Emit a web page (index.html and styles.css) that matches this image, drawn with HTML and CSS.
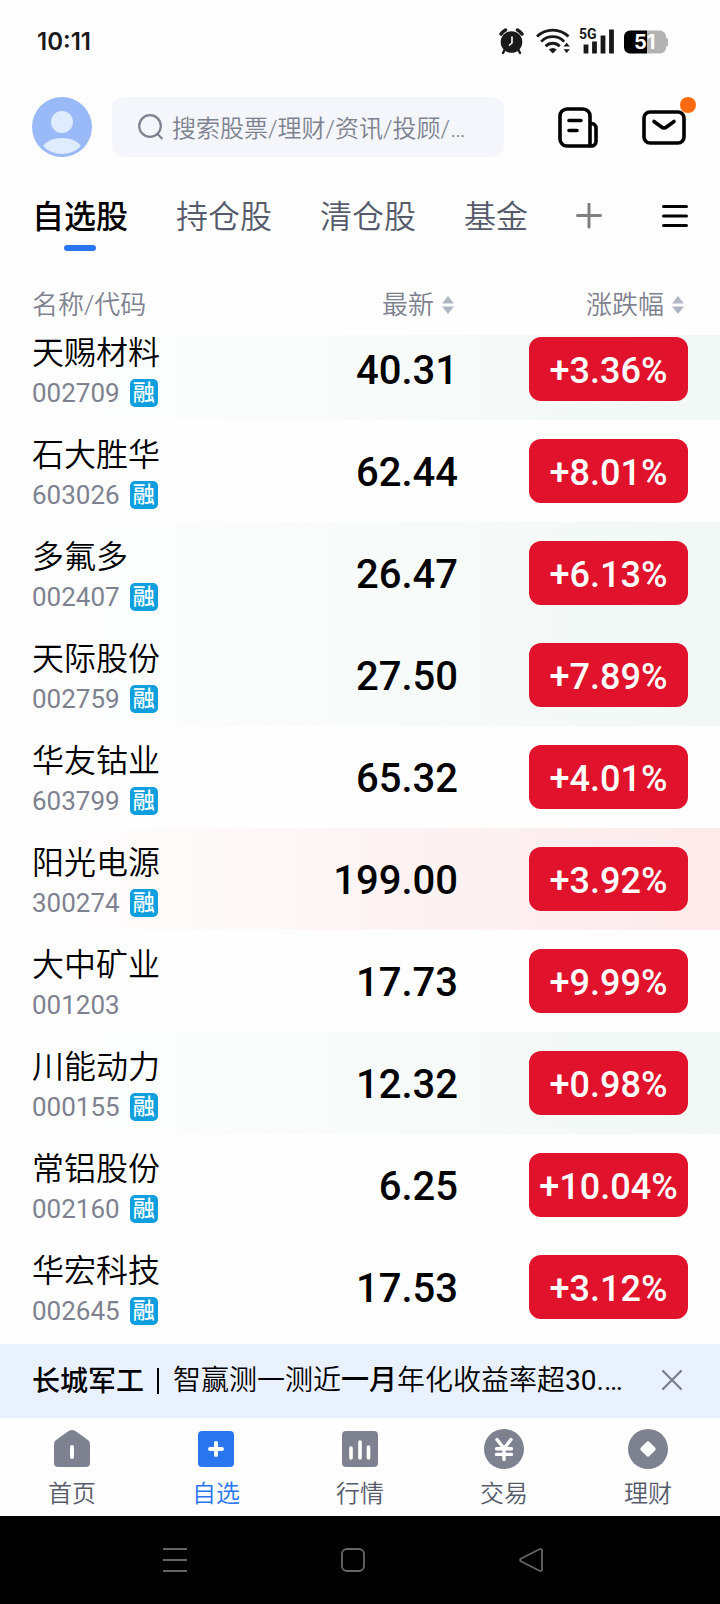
FILE: index.html
```html
<!DOCTYPE html>
<html lang="zh-CN">
<head>
<meta charset="utf-8">
<meta name="viewport" content="width=device-width, initial-scale=1">
<title>自选股</title>
<link rel="stylesheet" href="styles.css">
</head>
<body>
<div class="status">
  <span class="clock">10:11</span>
  <div class="status-icons">
    <svg width="26" height="28" viewBox="0 0 26 28" aria-hidden="true">
      <circle cx="12.500" cy="15" r="10.800" fill="#1a1a1a"/>
      <path d="M2 7A12 12 0 0 1 6.500 3M23 7A12 12 0 0 0 18.500 3" fill="none" stroke="#1a1a1a" stroke-width="3.400" stroke-linecap="round"/>
      <path d="M5.500 23l-1.500 3M19.500 23l1.500 3" stroke="#1a1a1a" stroke-width="2.400" stroke-linecap="round"/>
      <path d="M13 9.500v6.500l-3 2.500" fill="none" stroke="#fff" stroke-width="1.600"/>
    </svg>
    <svg width="34" height="28" viewBox="0 0 34 28" aria-hidden="true">
      <g fill="none" stroke="#1a1a1a" stroke-width="2.800">
        <path d="M1 9.500a22.500 22.500 0 0 1 31.500 0"/>
        <path d="M5.200 14.600a16 16 0 0 1 23 0"/>
        <path d="M9.600 19.200a10 10 0 0 1 14.200 0"/>
      </g>
      <path d="M12.800 22.600a6 6 0 0 1 8 0L16.800 26.600z" fill="#1a1a1a"/>
      <path d="M27.500 19.500l3.200-3.800 3.200 3.800zM27.500 22.200h6.400l-3.200 3.800z" fill="#1a1a1a"/>
    </svg>
    <svg width="36" height="28" viewBox="0 0 36 28" aria-hidden="true">
      <text x="0" y="12" class="net">5G</text>
      <path d="M7 17.500v9M15.500 14.500v12M24 8.500v18M32.500 2.500v24" stroke="#1a1a1a" stroke-width="4.800" stroke-linecap="butt"/>
    </svg>
    <svg width="44" height="28" viewBox="0 0 44 28" aria-hidden="true">
      <path d="M23 3.500h13a6 6 0 0 1 6 6v1.500a3.500 3.500 0 0 1 0 8.500a6 6 0 0 1-6 7H23z" fill="#b3b3b3"/>
      <path d="M23 3.500H6a6 6 0 0 0-6 6v11a6 6 0 0 0 6 6h17z" fill="#000"/>
      <text x="10" y="22" class="batt">51</text>
    </svg>
  </div>
</div>

<header class="top">
  <button class="icon-btn" aria-label="我的">
    <svg width="60" height="60" viewBox="0 0 60 60">
      <circle cx="30" cy="30" r="30" fill="#99b9f8"/>
      <circle cx="30" cy="25" r="11" fill="#dfebff"/>
      <path d="M11 49Q17 41 30 41T49 49Q41 57 30 57T11 49z" fill="#dfebff"/>
    </svg>
  </button>
  <label class="search">
    <svg width="26" height="26" viewBox="0 0 26 26" aria-hidden="true">
      <circle cx="12" cy="12" r="10.800" fill="none" stroke="#7e8290" stroke-width="2.200"/>
      <path d="M19.500 20l5 5" stroke="#7e8290" stroke-width="2.200"/>
    </svg>
    <input type="text" aria-label="搜索" placeholder="搜索股票/理财/资讯/投顾/…">
  </label>
  <div class="actions">
    <button class="icon-btn" aria-label="资讯">
      <svg width="44" height="44" viewBox="0 0 44 44" fill="none" stroke="#000" stroke-width="3.600">
        <path d="M34 41H11a7 7 0 0 1-7-7V11a7 7 0 0 1 7-7h16a7 7 0 0 1 7 7v30"/>
        <path d="M34 18.500h1.500a4.500 4.500 0 0 1 4.500 4.500v13.500a4.500 4.500 0 0 1-4.500 4.500H33"/>
        <path d="M13 15.500h12M13 25.500h8" stroke-linecap="round"/>
      </svg>
    </button>
    <button class="icon-btn mail" aria-label="消息">
      <svg width="48" height="44" viewBox="0 0 48 44" fill="none" stroke="#000" stroke-width="3.600">
        <rect x="4" y="7" width="40" height="31" rx="6"/>
        <path d="M14 16.500l7.500 5.500a4 4 0 0 0 5 0l7.500-5.500" stroke-linecap="round"/>
      </svg>
      <span class="dot"></span>
    </button>
  </div>
</header>

<nav class="groups" aria-label="分组">
  <a href="#" class="group current" aria-current="page">自选股</a>
  <a href="#" class="group">持仓股</a>
  <a href="#" class="group">清仓股</a>
  <a href="#" class="group">基金</a>
  <button class="icon-btn" aria-label="添加分组">
    <svg width="26" height="26" viewBox="0 0 26 26" stroke="#808080" stroke-width="3" stroke-linecap="round"><path d="M1.500 12.500h23M13 1v23"/></svg>
  </button>
  <button class="icon-btn menu" aria-label="菜单">
    <svg width="26" height="26" viewBox="0 0 26 26" stroke="#000" stroke-width="3" stroke-linecap="round"><path d="M1.500 3.500h23M1.500 13h23M1.500 22.500h23"/></svg>
  </button>
</nav>

<table class="quotes">
  <thead>
    <tr>
      <th class="name" scope="col">名称/代码</th>
      <th class="price" scope="col"><button class="sort">最新<svg width="12" height="18" viewBox="0 0 12 18" fill="#b0b7c4"><path d="M0 7.500L6 0l6 7.500zM0 10.500h12L6 18z"/></svg></button></th>
      <th class="change" scope="col"><button class="sort">涨跌幅<svg width="12" height="18" viewBox="0 0 12 18" fill="#b0b7c4"><path d="M0 7.500L6 0l6 7.500zM0 10.500h12L6 18z"/></svg></button></th>
    </tr>
  </thead>
  <tbody>
    <tr class="fall"><td class="name"><span class="title">天赐材料</span><span class="code">002709<i class="tag">融</i></span></td><td class="price">40.31</td><td class="change"><span class="pill">+3.36%</span></td></tr>
    <tr><td class="name"><span class="title">石大胜华</span><span class="code">603026<i class="tag">融</i></span></td><td class="price">62.44</td><td class="change"><span class="pill">+8.01%</span></td></tr>
    <tr class="fall"><td class="name"><span class="title">多氟多</span><span class="code">002407<i class="tag">融</i></span></td><td class="price">26.47</td><td class="change"><span class="pill">+6.13%</span></td></tr>
    <tr class="fall"><td class="name"><span class="title">天际股份</span><span class="code">002759<i class="tag">融</i></span></td><td class="price">27.50</td><td class="change"><span class="pill">+7.89%</span></td></tr>
    <tr><td class="name"><span class="title">华友钴业</span><span class="code">603799<i class="tag">融</i></span></td><td class="price">65.32</td><td class="change"><span class="pill">+4.01%</span></td></tr>
    <tr class="rise"><td class="name"><span class="title">阳光电源</span><span class="code">300274<i class="tag">融</i></span></td><td class="price">199.00</td><td class="change"><span class="pill">+3.92%</span></td></tr>
    <tr><td class="name"><span class="title">大中矿业</span><span class="code">001203</span></td><td class="price">17.73</td><td class="change"><span class="pill">+9.99%</span></td></tr>
    <tr class="fall"><td class="name"><span class="title">川能动力</span><span class="code">000155<i class="tag">融</i></span></td><td class="price">12.32</td><td class="change"><span class="pill">+0.98%</span></td></tr>
    <tr><td class="name"><span class="title">常铝股份</span><span class="code">002160<i class="tag">融</i></span></td><td class="price">6.25</td><td class="change"><span class="pill">+10.04%</span></td></tr>
    <tr><td class="name"><span class="title">华宏科技</span><span class="code">002645<i class="tag">融</i></span></td><td class="price">17.53</td><td class="change"><span class="pill">+3.12%</span></td></tr>
  </tbody>
</table>

<aside class="notice">
  <strong>长城军工</strong>
  <span class="rule"></span>
  <a href="#" class="notice-text">智赢测一测近<b>一月</b>年化收益率超<span class="figure">30.…</span></a>
  <button class="icon-btn" aria-label="关闭">
    <svg width="32" height="32" viewBox="0 0 32 32" stroke="#7e8290" stroke-width="2.400" stroke-linecap="round"><path d="M7 6l18 18M25 6L7 24"/></svg>
  </button>
</aside>

<nav class="tabs" aria-label="主导航">
  <a href="#" class="tab">
    <svg width="40" height="40" viewBox="0 0 40 40"><path d="M17 1.800Q20 0 23 1.800L36 11Q38 12.500 38 15V34a4 4 0 0 1-4 4H6a4 4 0 0 1-4-4V15Q2 12.500 4 11z" fill="#7e8290"/><path d="M20 18v10" stroke="#fff" stroke-width="4" stroke-linecap="round"/></svg>
    首页</a>
  <a href="#" class="tab current" aria-current="page">
    <svg width="40" height="40" viewBox="0 0 40 40"><rect x="2" y="2" width="36" height="36" rx="4" fill="#2a75f0"/><path d="M14 20h12M20 14v12" stroke="#fff" stroke-width="4" stroke-linecap="round"/></svg>
    自选</a>
  <a href="#" class="tab">
    <svg width="40" height="40" viewBox="0 0 40 40"><rect x="2" y="2" width="36" height="36" rx="4" fill="#7e8290"/><path d="M11 19v10M20 13v16M28.500 18v11" stroke="#fff" stroke-width="3.600" stroke-linecap="round"/></svg>
    行情</a>
  <a href="#" class="tab">
    <svg width="40" height="40" viewBox="0 0 40 40"><circle cx="20" cy="20" r="20" fill="#7e8290"/><path d="M13 10.500l7 9 7-9M20 20v10.500M12.500 19.800h15M12.500 25.400h15" fill="none" stroke="#fff" stroke-width="3.400" stroke-linecap="round"/></svg>
    交易</a>
  <a href="#" class="tab">
    <svg width="40" height="40" viewBox="0 0 40 40"><circle cx="20" cy="20" r="20" fill="#7e8290"/><rect x="14" y="14" width="12" height="12" rx="2" fill="#fff" transform="rotate(45 20 20)"/></svg>
    理财</a>
</nav>

<div class="system">
  <button class="icon-btn" aria-label="最近任务"><svg width="24" height="24" viewBox="0 0 24 24" stroke="#666" stroke-width="1.800"><path d="M0 1h24M0 12h24M0 23h24"/></svg></button>
  <button class="icon-btn" aria-label="主屏幕"><svg width="24" height="24" viewBox="0 0 24 24" fill="none" stroke="#666" stroke-width="1.800"><rect x="1" y="1" width="22" height="22" rx="5"/></svg></button>
  <button class="icon-btn" aria-label="返回"><svg width="24" height="24" viewBox="0 0 24 24" fill="none" stroke="#666" stroke-width="1.800"><path d="M20.500 1.300L2.200 10.500Q0 12 2.200 13.500L20.500 22.700Q23 23.500 23 21V3Q23 .5 20.500 1.300z"/></svg></button>
</div>
</body>
</html>
```

FILE: styles.css
```css
* {
  box-sizing: border-box;
}

body {
  margin: 0;
  height: 100vh;
  display: flex;
  flex-direction: column;
  background: #fefefe;
  color: #000;
  font-family: Roboto, "Noto Sans CJK SC", sans-serif;
  font-size: 26px;
}

a {
  color: inherit;
  text-decoration: none;
}

button {
  margin: 0;
  padding: 0;
  border: 0;
  background: none;
  font: inherit;
  color: inherit;
}

svg {
  display: block;
  flex: none;
}

.icon-btn {
  flex: none;
}

/* Status bar */
.status {
  display: flex;
  align-items: center;
  justify-content: space-between;
  height: 82px;
  flex: none;
  padding: 0 52px 0 37px;
}

.clock {
  padding-top: 2px;
  font: 600 24px/32px Inter, sans-serif;
  color: #1a1a1a;
}

.status-icons {
  display: flex;
  gap: 9px;
}

.status-icons svg:first-child {
  margin-right: 2px;
}

.net {
  font: 700 14px Roboto, sans-serif;
  fill: #1a1a1a;
}

.batt {
  font: 700 20px Inter, sans-serif;
  fill: #fff;
}

/* Search header */
.top {
  display: flex;
  align-items: center;
  flex: none;
  height: 90px;
  padding: 0 32px;
  gap: 20px;
}

.search {
  flex: 1;
  display: flex;
  align-items: center;
  gap: 8px;
  min-width: 0;
  height: 60px;
  padding: 0 26px;
  border-radius: 12px;
  background: #f4f6fb;
}

.search input {
  flex: 1;
  min-width: 0;
  padding: 3px 0 0;
  border: 0;
  outline: 0;
  background: none;
  font: 350 24px/36px Roboto, "Noto Sans CJK SC", sans-serif;
}

.search input::placeholder {
  color: #7e8290;
  opacity: 1;
}

.actions {
  display: flex;
  gap: 40px;
  padding-left: 32px;
}

.mail {
  position: relative;
}

.dot {
  position: absolute;
  top: -8px;
  right: -8px;
  width: 16px;
  height: 16px;
  border-radius: 50%;
  background: #ff6a0f;
}

/* Watchlist groups */
.groups {
  display: flex;
  align-items: center;
  flex: none;
  height: 88px;
  padding: 0 32px;
  gap: 48px;
}

.group {
  position: relative;
  padding-top: 2px;
  font-size: 32px;
  line-height: 48px;
  color: #565b6b;
  font-weight: 350;
}

.group.current {
  color: #000;
  font-weight: 500;
}

.group.current::after {
  content: "";
  position: absolute;
  left: 50%;
  bottom: -10px;
  width: 32px;
  height: 6px;
  margin-left: -16px;
  border-radius: 3px;
  background: #2a75f0;
}

.menu {
  margin-left: auto;
}

/* Quotes */
.quotes {
  flex: 1;
  min-height: 0;
  display: flex;
  flex-direction: column;
}

.quotes tr {
  display: flex;
  padding: 0 32px;
}

.quotes th,
.quotes td {
  padding: 0;
}

.quotes thead tr {
  height: 75px;
  padding-top: 14px;
  align-items: center;
  color: #7e8290;
}

.quotes th {
  font-weight: 350;
  line-height: 40px;
}

.quotes th.price,
.quotes th.change {
  padding-right: 4px;
}

.sort {
  display: flex;
  align-items: center;
  justify-content: flex-end;
  gap: 8px;
  width: 100%;
}

.quotes tbody {
  display: block;
  flex: 1;
  min-height: 0;
  overflow: hidden;
}

.quotes tbody tr {
  height: 102px;
}

.quotes tbody tr:first-child {
  margin-top: -17px;
}

.fall {
  background: linear-gradient(90deg, #fefefe 4%, #f1f8f6);
}

.rise {
  background: linear-gradient(90deg, #fefefe 4%, #fdeaeb);
}

.name {
  flex: 1;
  text-align: left;
}

.quotes td.name {
  padding-top: 17px;
}

.title {
  display: block;
  font-size: 32px;
  line-height: 36px;
  font-weight: 350;
}

.code {
  display: flex;
  align-items: center;
  gap: 10px;
  line-height: 44px;
  color: #7e8290;
}

.tag {
  width: 28px;
  height: 28px;
  border-radius: 5px;
  background: #0f9fde;
  color: #fff;
  font-size: 22px;
  font-style: normal;
  font-weight: 500;
  line-height: 28px;
  text-align: center;
}

.price {
  width: 160px;
  text-align: right;
}

.quotes td.price {
  padding-top: 2px;
  font-size: 40px;
  font-weight: 500;
  line-height: 102px;
}

.change {
  width: 230px;
}

td.change {
  display: flex;
  align-items: center;
  justify-content: flex-end;
}

.pill {
  width: 159px;
  height: 64px;
  padding-top: 2px;
  border-radius: 12px;
  background: #e1122c;
  color: #fff;
  font-size: 36px;
  font-weight: 500;
  line-height: 64px;
  text-align: center;
}

/* Notice strip */
.notice {
  display: flex;
  align-items: center;
  flex: none;
  height: 74px;
  padding: 0 32px;
  background: #eaf1fe;
  font-size: 28px;
  line-height: 40px;
}

.notice strong {
  padding-top: 2px;
  font-weight: 500;
}

.notice .rule {
  width: 2px;
  height: 26px;
  margin: 0 14px 0 13px;
  background: #000;
}

.notice-text {
  flex: 1;
  min-width: 0;
  overflow: hidden;
  white-space: nowrap;
  font-weight: 350;
}

.notice-text b {
  font-weight: 500;
}

.figure {
  font-weight: 400;
}

/* Bottom tabs */
.tabs {
  display: flex;
  flex: none;
  height: 98px;
  padding-top: 11px;
}

.tab {
  flex: 1;
  display: flex;
  flex-direction: column;
  align-items: center;
  gap: 7px;
  font-size: 24px;
  line-height: 36px;
  font-weight: 350;
  color: #565b6b;
}

.tab.current {
  color: #2a75f0;
}

/* System navigation */
.system {
  display: flex;
  align-items: center;
  justify-content: center;
  flex: none;
  gap: 154px;
  height: 88px;
  padding-right: 14px;
  background: #000;
}
```
